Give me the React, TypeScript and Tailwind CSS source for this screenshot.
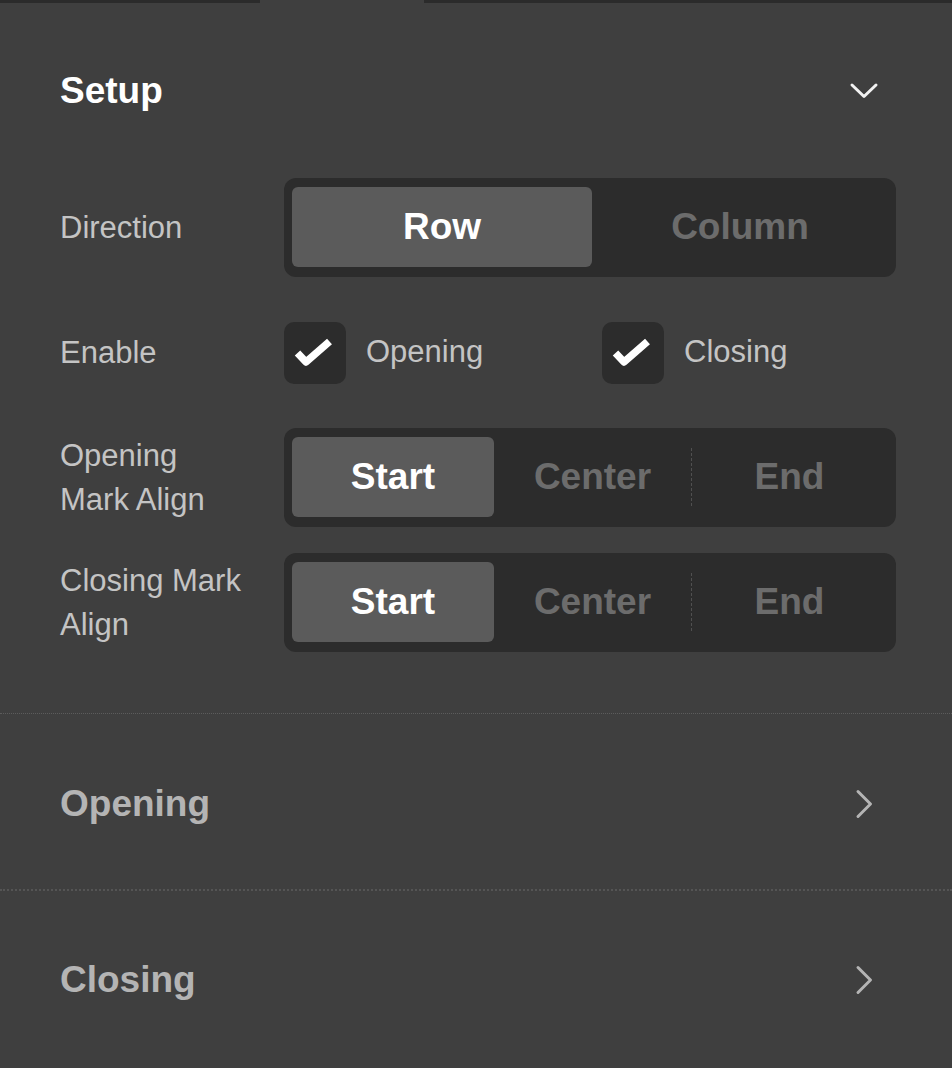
import { useState } from 'react';

// Panel de réglages — repris à la main d'une capture

type Align = 'start' | 'center' | 'end';

const FONT = { fontFamily: '"Liberation Sans", Arial, sans-serif' };

function ChevronDown() {
  return (
    <svg width="32" height="32" viewBox="0 0 32 32" fill="none">
      <path d="M4 10 L16 21.5 L28 10" stroke="#f2f2f2" strokeWidth="3" strokeLinecap="round" strokeLinejoin="round" />
    </svg>
  );
}

function ChevronRight() {
  return (
    <svg width="32" height="32" viewBox="0 0 32 32" fill="none">
      <path d="M10 3.5 L22.5 16 L10 28.5" stroke="#b4b4b4" strokeWidth="3" strokeLinecap="round" strokeLinejoin="round" />
    </svg>
  );
}

function Check({ checked, label, onToggle }: { checked: boolean; label: string; onToggle: () => void }) {
  return (
    <button className="flex items-center gap-[20px]" onClick={onToggle}>
      <span className="w-[62px] h-[62px] rounded-[10px] bg-[#2c2c2c] flex items-center justify-center">
        {checked && (
          <svg width="62" height="62" viewBox="0 0 62 62" fill="none">
            <path d="M13.5 31 L22 40 L45.5 19.5" stroke="#ffffff" strokeWidth="7.5" strokeLinejoin="round" />
          </svg>
        )}
      </span>
      <span className="text-[31px] text-[#c4c4c4]">{label}</span>
    </button>
  );
}

function AlignControl({ value, onChange }: { value: Align; onChange: (v: Align) => void }) {
  const opts: { key: Align; label: string }[] = [
    { key: 'start', label: 'Start' },
    { key: 'center', label: 'Center' },
    { key: 'end', label: 'End' },
  ];
  return (
    <div className="flex-1 h-[99px] rounded-[12px] bg-[#2c2c2c] px-[8px] pt-[9px] pb-[10px] flex items-stretch">
      {opts.map((o, i) => {
        const active = o.key === value;
        const prevActive = i > 0 && opts[i - 1].key === value;
        return (
          <div key={o.key} className={`flex items-center relative ${i === 0 ? 'w-[202px]' : 'flex-1'}`}>
            {i > 0 && !active && !prevActive && (
              <span className="absolute left-0 top-[11px] bottom-[11px] border-l border-dashed border-[#505050]" />
            )}
            <button
              onClick={() => onChange(o.key)}
              className={`w-full h-full rounded-[6px] text-[37px] font-bold ${
                active ? 'bg-[#5b5b5b] text-white' : 'text-[#6c6c6c]'
              }`}
            >
              {o.label}
            </button>
          </div>
        );
      })}
    </div>
  );
}

function Row({ label, children }: { label: string; children: React.ReactNode }) {
  return (
    <div className="flex items-center min-h-[99px]">
      <div className="w-[190px] mr-[34px] text-[31px] leading-[44px] text-[#c4c4c4]">{label}</div>
      {children}
    </div>
  );
}

export default function App() {
  const [dir, setDir] = useState<'row' | 'column'>('row');
  const [opening, setOpening] = useState(true);
  const [closing, setClosing] = useState(true);
  const [openAlign, setOpenAlign] = useState<Align>('start');
  const [closeAlign, setCloseAlign] = useState<Align>('start');

  return (
    <div className="w-[952px] min-h-[1068px] bg-[#3f3f3f]" style={FONT}>
      {/* tabs strip */}
      <div className="flex h-[3px]">
        <div className="w-[260px] bg-[#2b2b2b]" />
        <div className="w-[164px]" />
        <div className="flex-1 bg-[#2b2b2b]" />
      </div>

      {/* Setup */}
      <section className="pl-[60px] pr-[56px] pt-[60px] pb-[61px]">
        <div className="h-[56px] flex items-center justify-between">
          <h2 className="text-[37px] font-bold text-white">Setup</h2>
          <span className="mr-[16px]">
            <ChevronDown />
          </span>
        </div>

        <div className="mt-[59px] flex flex-col gap-[26px]">
          <Row label="Direction">
            <div className="flex-1 h-[99px] rounded-[12px] bg-[#2c2c2c] px-[8px] pt-[9px] pb-[10px] flex">
              {(['row', 'column'] as const).map(d => (
                <button
                  key={d}
                  onClick={() => setDir(d)}
                  className={`rounded-[6px] text-[37px] font-bold ${d === 'row' ? 'w-[300px]' : 'flex-1'} ${
                    dir === d ? 'bg-[#5b5b5b] text-white' : 'text-[#6c6c6c]'
                  }`}
                >
                  {d === 'row' ? 'Row' : 'Column'}
                </button>
              ))}
            </div>
          </Row>

          <Row label="Enable">
            <div className="flex-1 flex">
              <div className="w-[318px]">
                <Check checked={opening} label="Opening" onToggle={() => setOpening(!opening)} />
              </div>
              <Check checked={closing} label="Closing" onToggle={() => setClosing(!closing)} />
            </div>
          </Row>

          <Row label="Opening Mark Align">
            <AlignControl value={openAlign} onChange={setOpenAlign} />
          </Row>

          <Row label="Closing Mark Align">
            <AlignControl value={closeAlign} onChange={setCloseAlign} />
          </Row>
        </div>
      </section>

      {/* Opening */}
      <section className="border-t border-dotted border-[#5c5c5c] pl-[60px] pr-[56px] pt-[62px] pb-[57px]">
        <div className="h-[56px] flex items-center justify-between">
          <h2 className="text-[37px] font-bold text-[#b4b4b4]">Opening</h2>
          <span className="mr-[16px]">
            <ChevronRight />
          </span>
        </div>
      </section>

      {/* Closing */}
      <section className="border-t-2 border-dotted border-[#555555] pl-[60px] pr-[56px] pt-[61px] pb-[57px]">
        <div className="h-[56px] flex items-center justify-between">
          <h2 className="text-[37px] font-bold text-[#b4b4b4]">Closing</h2>
          <span className="mr-[16px]">
            <ChevronRight />
          </span>
        </div>
      </section>
    </div>
  );
}
